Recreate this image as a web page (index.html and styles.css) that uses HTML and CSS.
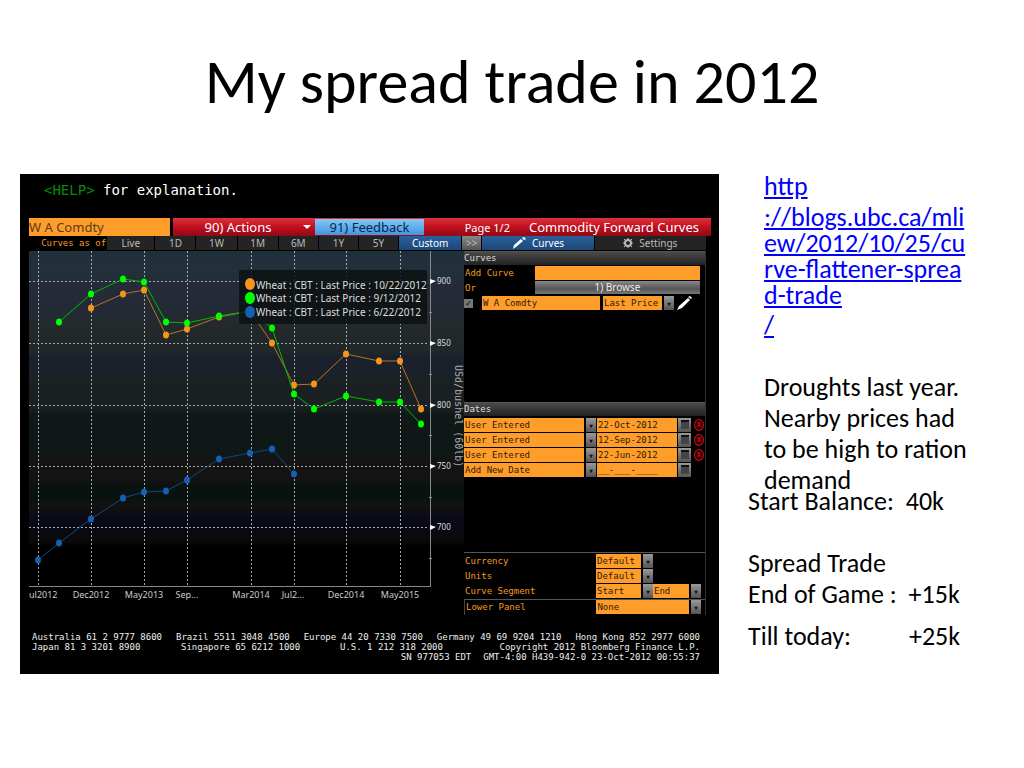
FILE: index.html
```html
<!DOCTYPE html>
<html lang="en">
<head>
    <meta charset="UTF-8">
    <meta name="viewport" content="width=device-width, initial-scale=1.0">
    <title>My spread trade in 2012</title>
    <link rel="stylesheet" href="styles.css">
</head>
<body>
    <h1>My spread trade in 2012</h1>

    <div class="slide">
        <section class="terminal">
            <p class="help"><span>&lt;HELP&gt;</span> for explanation.</p>

            <div class="toolbar">
                <input class="ticker" type="text" value="W A Comdty" aria-label="Security">
                <button class="actions" type="button"><span>90) Actions</span><i class="drop"></i></button>
                <button class="feedback" type="button">91) Feedback</button>
                <span class="page">Page 1/2</span>
                <h2>Commodity Forward Curves</h2>
            </div>

            <div class="tabs">
                <span class="as-of">Curves as of</span>
                <button type="button">Live</button>
                <button type="button">1D</button>
                <button type="button">1W</button>
                <button type="button">1M</button>
                <button type="button">6M</button>
                <button type="button">1Y</button>
                <button type="button">5Y</button>
                <button class="on" type="button">Custom</button>
                <button class="more" type="button">&gt;&gt;</button>
                <button class="on" type="button">
                    <svg width="14" height="12" viewBox="0 0 14 12"><path d="M1 12l1-4 7-6 2 2-7 6zM10 1l2-1 2 2-2 1z" fill="#fff"/></svg>
                    Curves
                </button>
                <button type="button">
                    <svg width="10" height="10" viewBox="0 0 10 10"><circle cx="5" cy="5" r="3" fill="none" stroke="#bbb" stroke-width="2"/><path d="M5 0v2M5 8v2M0 5h2M8 5h2M1 1l2 2M7 7l2 2M9 1l-2 2M3 7l-2 2" stroke="#bbb"/></svg>
                    Settings
                </button>
            </div>

            <div class="workspace">
                <svg class="chart" viewBox="0 0 435 364" role="img" aria-label="Wheat forward curves">
                    <defs>
                        <linearGradient id="bands" x1="0" y1="0" x2="0" y2="1">
                            <stop offset="0" stop-color="#20303a"/>
                            <stop offset=".06" stop-color="#22303a"/>
                            <stop offset=".09" stop-color="#252b38"/>
                            <stop offset=".18" stop-color="#242a34"/>
                            <stop offset=".21" stop-color="#23292a"/>
                            <stop offset=".28" stop-color="#20272a"/>
                            <stop offset=".29" stop-color="#1a202c"/>
                            <stop offset=".34" stop-color="#1a212a"/>
                            <stop offset=".36" stop-color="#1b2122"/>
                            <stop offset=".43" stop-color="#1a2021"/>
                            <stop offset=".45" stop-color="#101918"/>
                            <stop offset=".56" stop-color="#101717"/>
                            <stop offset=".58" stop-color="#141414"/>
                            <stop offset=".63" stop-color="#131313"/>
                            <stop offset=".65" stop-color="#08120f"/>
                            <stop offset=".68" stop-color="#0a1210"/>
                            <stop offset=".70" stop-color="#121212"/>
                            <stop offset=".73" stop-color="#0b0b18"/>
                            <stop offset=".77" stop-color="#090914"/>
                            <stop offset=".80" stop-color="#0a0a0a"/>
                            <stop offset=".81" stop-color="#000"/>
                        </linearGradient>
                    </defs>
                    <rect width="435" height="364" fill="url(#bands)"/>

                    <!-- grid -->
                    <path class="grid" d="M9 0V335M62 0V335M115 0V335M158 0V335M222 0V335M265 0V335M317 0V335M371 0V335M0 30H400M0 92H400M0 154H400M0 215H400M0 276H400"/>
                    <path class="axis" d="M401 0V335H0"/>
                    <path class="axis" d="M400 61h3M400 123h3M400 184h3M400 246h3M400 307h3"/>
                    <path fill="#fff" d="M401 28l6 2-6 3zM401 90l6 2-6 3zM401 152l6 2-6 3zM401 213l6 2-6 3zM401 274l6 2-6 3z"/>

                    <!-- 10/22/2012 -->
                    <g class="orange">
                        <polyline points="62,57 94,43 115,39 137,84 158,78 190,66 221,60 243,92 265,134 285,133 317,103 350,110 371,110 392,158"/>
                    </g>
                    <!-- 9/12/2012 -->
                    <g class="green">
                        <polyline points="30,71 62,43 94,28 115,31 137,71 158,72 190,65 221,60 243,77 265,143 285,158 317,145 350,151 371,151 392,173"/>
                    </g>
                    <!-- 6/22/2012 -->
                    <g class="blue">
                        <polyline points="9,309 30,292 62,268 94,247 115,241 137,240 158,229 190,208 221,202 243,198 265,223"/>
                    </g>

                    <rect x="210" y="19" width="188" height="54" rx="2" fill="#0c1212" fill-opacity=".85"/>
                    <ellipse cx="221" cy="33" rx="5" ry="6" fill="#f7941c"/>
                    <ellipse cx="221" cy="47" rx="5" ry="6" fill="#0f0"/>
                    <ellipse cx="221" cy="61" rx="5" ry="6" fill="#1660b4"/>
                    <g class="legend">
                        <text x="227" y="38">Wheat : CBT : Last Price : 10/22/2012</text>
                        <text x="227" y="51">Wheat : CBT : Last Price : 9/12/2012</text>
                        <text x="227" y="65">Wheat : CBT : Last Price : 6/22/2012</text>
                    </g>
                    <g class="price">
                        <text x="408" y="33">900</text>
                        <text x="408" y="95">850</text>
                        <text x="408" y="157">800</text>
                        <text x="408" y="218">750</text>
                        <text x="408" y="279">700</text>
                    </g>
                    <g class="month">
                        <text class="first" x="0" y="347">ul2012</text>
                        <text x="62" y="347">Dec2012</text>
                        <text x="115" y="347">May2013</text>
                        <text x="158" y="347">Sep...</text>
                        <text x="222" y="347">Mar2014</text>
                        <text x="264" y="347">Jul2...</text>
                        <text x="317" y="347">Dec2014</text>
                        <text x="371" y="347">May2015</text>
                    </g>
                    <text class="unit" transform="translate(426 114) rotate(90)">USd/bushel (60lb)</text>
                </svg>

                <form class="settings">
                    <fieldset class="curves">
                        <legend>Curves</legend>
                        <div class="row">
                            <label for="add-curve">Add Curve</label>
                            <input id="add-curve" type="text">
                        </div>
                        <div class="row">
                            <span>Or</span>
                            <button class="browse" type="button">1) Browse</button>
                        </div>
                        <div class="row curve">
                            <input class="tick" type="checkbox" checked aria-label="Show curve">
                            <input type="text" value="W A Comdty" aria-label="Curve">
                            <span class="pick"><select aria-label="Price"><option>Last Price</option></select></span>
                            <svg width="16" height="14" viewBox="0 0 16 14"><path d="M0 14l2-4 9-8 2 2-8 8zM11 1l2-1 2 2-1 1z" fill="#fff"/></svg>
                        </div>
                    </fieldset>

                    <fieldset class="dates">
                        <legend>Dates</legend>
                        <div class="row date">
                            <span class="pick"><select aria-label="Date type 1"><option>User Entered</option></select></span>
                            <input type="text" value="22-Oct-2012" aria-label="Date 1">
                            <button class="calendar" type="button" aria-label="Calendar"></button>
                            <button class="remove" type="button" aria-label="Remove">x</button>
                        </div>
                        <div class="row date">
                            <span class="pick"><select aria-label="Date type 2"><option>User Entered</option></select></span>
                            <input type="text" value="12-Sep-2012" aria-label="Date 2">
                            <button class="calendar" type="button" aria-label="Calendar"></button>
                            <button class="remove" type="button" aria-label="Remove">x</button>
                        </div>
                        <div class="row date">
                            <span class="pick"><select aria-label="Date type 3"><option>User Entered</option></select></span>
                            <input type="text" value="22-Jun-2012" aria-label="Date 3">
                            <button class="calendar" type="button" aria-label="Calendar"></button>
                            <button class="remove" type="button" aria-label="Remove">x</button>
                        </div>
                        <div class="row date">
                            <span class="pick"><select aria-label="New date type"><option>Add New Date</option></select></span>
                            <input type="text" value="__-___-____" aria-label="New date">
                            <button class="calendar" type="button" aria-label="Calendar"></button>
                        </div>
                    </fieldset>

                    <div class="display">
                        <div class="row option">
                            <label for="currency">Currency</label>
                            <span class="pick"><select id="currency"><option>Default</option></select></span>
                        </div>
                        <div class="row option">
                            <label for="units">Units</label>
                            <span class="pick"><select id="units"><option>Default</option></select></span>
                        </div>
                        <div class="row option">
                            <label for="segment">Curve Segment</label>
                            <span class="pick"><select id="segment"><option>Start</option></select></span>
                            <span class="pick"><select aria-label="Segment end"><option>End</option></select></span>
                        </div>
                    </div>
                    <div class="row option lower">
                        <label for="lower">Lower Panel</label>
                        <span class="pick wide"><select id="lower"><option>None</option></select></span>
                    </div>
                </form>
            </div>

            <footer>
                <div class="offices">
                    <span>Australia 61 2 9777 8600</span>
                    <span>Brazil 5511 3048 4500</span>
                    <span>Europe 44 20 7330 7500</span>
                    <span>Germany 49 69 9204 1210</span>
                    <span>Hong Kong 852 2977 6000</span>
                </div>
                <div class="offices second">
                    <span>Japan 81 3 3201 8900</span>
                    <span>Singapore 65 6212 1000</span>
                    <span>U.S. 1 212 318 2000</span>
                    <span>Copyright 2012 Bloomberg Finance L.P.</span>
                </div>
                <div class="serial">
                    <span>SN 977053 EDT</span>
                    <span>GMT-4:00 H439-942-0 23-Oct-2012 00:55:37</span>
                </div>
            </footer>
        </section>

        <aside class="notes">
            <div class="story">
                <a href="http://blogs.ubc.ca/mliew/2012/10/25/curve-flattener-spread-trade/">
                    <span>http</span>
                    <span class="path">://blogs.ubc.ca/mli<br>ew/2012/10/25/cu<br>rve-flattener-sprea<br>d-trade</span>
                    <span>/</span>
                </a>
                <p>Droughts last year.<br>Nearby prices had<br>to be high to ration<br>demand</p>
            </div>
            <div class="balance">
                <p>Start Balance:&nbsp; 40k</p>
                <p class="result">Spread Trade<br>End of Game :&nbsp; +15k</p>
                <p class="today"><span>Till today:</span><span>+25k</span></p>
            </div>
        </aside>
    </div>

    <script>
        // draw a marker on every point of each curve
        document.querySelectorAll('.chart polyline').forEach(line => {
            line.getAttribute('points').split(' ').forEach(point => {
                const [x, y] = point.split(',');
                const dot = document.createElementNS('http://www.w3.org/2000/svg', 'ellipse');
                dot.setAttribute('cx', x);
                dot.setAttribute('cy', y);
                dot.setAttribute('rx', 3);
                dot.setAttribute('ry', 3.5);
                line.parentNode.appendChild(dot);
            });
        });
    </script>
</body>
</html>
```

FILE: styles.css
```css
* {
    box-sizing: border-box;
}
body {
    margin: 0;
    background: #fff;
    color: #000;
    font-family: Carlito, Lato, sans-serif;
}
h1 {
    margin: 0;
    padding: 46px 20px 56px;
    font-size: 62px;
    line-height: 72px;
    font-weight: normal;
    text-align: center;
}
.slide {
    display: grid;
    grid-template-columns: minmax(0, 1fr) 276px;
    gap: 29px;
    align-items: start;
    padding-left: 20px;
}

/* terminal */
.terminal {
    padding: 0 8px 12px 9px;
    background: #000;
    color: #ddd;
    font: 9px/15px "DejaVu Sans Mono", monospace;
}
.terminal input, .terminal select, .terminal button {
    min-width: 0;
    margin: 0;
    padding: 0;
    border: 0;
    border-radius: 0;
    font: inherit;
    color: inherit;
}
.help {
    margin: 0;
    padding: 6px 15px 18px;
    font-size: 14px;
    line-height: 20px;
    color: #fff;
}
.help span {
    color: #0a8a0a;
}
.toolbar {
    display: grid;
    grid-template-columns: 144fr 142fr 109fr 86fr 201fr;
    align-items: center;
    height: 18px;
    background: linear-gradient(#e0303c, #c01020 50%, #900814);
    font-family: "Noto Sans", sans-serif;
    color: #fff;
}
.toolbar .ticker {
    align-self: stretch;
    border-right: 3px solid #000;
    background: #ff9d2b;
    color: #5c3c14;
    font-size: 13px;
}
.toolbar .actions {
    display: grid;
    grid-template-columns: 1fr 12px;
    align-items: center;
    height: 18px;
    background: none;
    font-size: 13px;
}
.drop {
    width: 8px;
    border: 4px solid transparent;
    border-top-color: #fff;
    border-bottom: 0;
}
.toolbar .feedback {
    height: 16px;
    background: linear-gradient(#84c8f8, #3f97e0);
    color: #06264a;
    font-size: 13px;
    line-height: 16px;
}
.page {
    font-size: 11px;
    text-align: right;
    white-space: nowrap;
}
.toolbar h2 {
    margin: 0;
    padding-right: 12px;
    font-size: 13px;
    font-weight: normal;
    text-align: right;
    white-space: nowrap;
}
.tabs {
    display: grid;
    grid-template-columns: 77fr 47fr 40fr 40fr 40fr 39fr 39fr 39fr 62fr 19fr 111fr 111fr;
    gap: 1px;
    height: 15px;
    margin-right: 5px;
    font: 10px/14px "Noto Sans", sans-serif;
}
.tabs .as-of {
    font: 9px/15px "DejaVu Sans Mono", monospace;
    color: #f59a23;
    text-align: right;
    white-space: nowrap;
}
.tabs button {
    display: flex;
    align-items: center;
    justify-content: center;
    gap: 6px;
    height: 14px;
    background: #242424;
    color: #bbb;
}
.tabs .on {
    background: linear-gradient(#2a609c, #1c4878);
    color: #fff;
}
.tabs .more {
    background: linear-gradient(#888, #555);
}
.workspace {
    display: grid;
    grid-template-columns: 435fr 242fr;
    margin-right: 5px;
}

/* chart */
.chart {
    display: block;
    width: 100%;
    font-family: "Noto Sans", sans-serif;
}
.grid {
    fill: none;
    stroke: #aaa;
    stroke-dasharray: 2 2;
    shape-rendering: crispEdges;
}
.axis {
    fill: none;
    stroke: #888;
    shape-rendering: crispEdges;
}
.orange {
    fill: #f7941c;
    stroke: #b87420;
}
.green {
    fill: #0f0;
    stroke: #0b0;
}
.blue {
    fill: #1660b4;
    stroke: #12487c;
}
.chart polyline {
    fill: none;
}
.chart ellipse {
    stroke: none;
}
.legend {
    fill: #ddd;
    font-size: 10px;
}
.price {
    fill: #ddd;
    font-size: 8px;
}
.month {
    fill: #ccc;
    font-size: 9px;
    text-anchor: middle;
}
.month .first {
    text-anchor: start;
}
.unit {
    fill: #aaa;
    font: 10px "DejaVu Sans Mono", monospace;
}

/* settings panel */
.settings {
    display: flex;
    flex-direction: column;
    border-right: 1px solid #333;
    color: #f59a23;
}
fieldset {
    min-width: 0;
    margin: 0;
    padding: 0;
    border: 0;
}
.curves, .dates {
    flex: 1;
}
legend {
    width: 100%;
    height: 14px;
    margin-bottom: 1px;
    padding: 0;
    border-top: 1px solid #555;
    background: linear-gradient(#4a4a4a, #222);
    color: #ddd;
    line-height: 13px;
}
.dates legend {
    margin-bottom: 2px;
}
.row {
    display: grid;
    grid-template-columns: 70fr 166fr 5fr;
    height: 15px;
    padding-left: 1px;
    line-height: 14px;
    white-space: nowrap;
}
.row input[type="text"], .pick select {
    height: 14px;
    padding-left: 1px;
    background: #ff9d2b;
    color: #2c1b05;
}
.row input[type="text"] {
    width: 100%;
}
.row .browse {
    height: 13px;
    background: linear-gradient(#888, #555 60%, #777);
    color: #eee;
    font: 10px/13px "Noto Sans", sans-serif;
}
.pick {
    display: flex;
    gap: 2px;
    min-width: 0;
}
.pick select {
    flex: 1;
    appearance: none;
}
.pick::after {
    content: "▼";
    width: 10px;
    height: 14px;
    background: linear-gradient(#999, #555);
    color: #111;
    font-size: 6px;
    line-height: 15px;
    text-align: center;
}
.curve {
    grid-template-columns: 15fr 118fr 71fr 28fr;
    column-gap: 3px;
    padding-left: 0;
}
.row .tick {
    display: grid;
    place-items: center;
    width: 9px;
    height: 9px;
    margin-top: 3px;
    appearance: none;
    background: #777;
    color: #000;
    font-size: 9px;
    line-height: 9px;
}
.tick:checked::before {
    content: "✓";
}
.date {
    grid-template-columns: 132fr 80fr 13fr 13fr;
    column-gap: 1px;
    padding-left: 0;
}
.calendar {
    display: grid;
    place-items: center;
    height: 14px;
    background: linear-gradient(#999, #555);
}
.calendar::before {
    content: "";
    width: 8px;
    height: 7px;
    border-top: 2px solid #111;
    background: #444;
}
.terminal .remove {
    width: 10px;
    height: 12px;
    margin: 1px 0 0 2px;
    border: 1px solid #d01018;
    border-radius: 50%;
    background: #300;
    color: #e01820;
    font-size: 8px;
    line-height: 8px;
}
.display {
    padding-top: 1px;
    border-top: 1px solid #555;
}
.option {
    grid-template-columns: 131fr 57fr 48fr 4fr;
}
.lower {
    height: 16px;
    border-top: 1px solid #555;
    border-left: 1px solid #444;
}
.lower .wide {
    grid-column: span 2;
}

/* contact lines */
footer {
    padding: 17px 11px 0 3px;
    font-size: 9px;
    line-height: 10px;
    color: #eee;
    white-space: nowrap;
}
.offices {
    display: flex;
    justify-content: space-between;
}
.second {
    display: grid;
    grid-template-columns: 149fr 159fr 148fr 212fr;
}
.second span:last-child {
    text-align: right;
}
.serial {
    display: flex;
    justify-content: flex-end;
    gap: 12px;
}

/* notes */
.notes {
    margin-top: -3px;
    font-size: 26px;
    line-height: 31px;
    white-space: nowrap;
}
.notes p {
    margin: 0;
}
.story {
    padding-left: 16px;
}
.story a {
    color: #00f;
}
.story a span {
    display: block;
}
.story .path {
    padding: 2px 0;
    line-height: 26px;
}
.story p {
    margin-top: 31px;
}
.balance {
    margin-top: -10px;
}
.balance .result {
    margin-top: 31px;
}
.balance .today {
    display: flex;
    gap: 58px;
    margin-top: 11px;
}
```
